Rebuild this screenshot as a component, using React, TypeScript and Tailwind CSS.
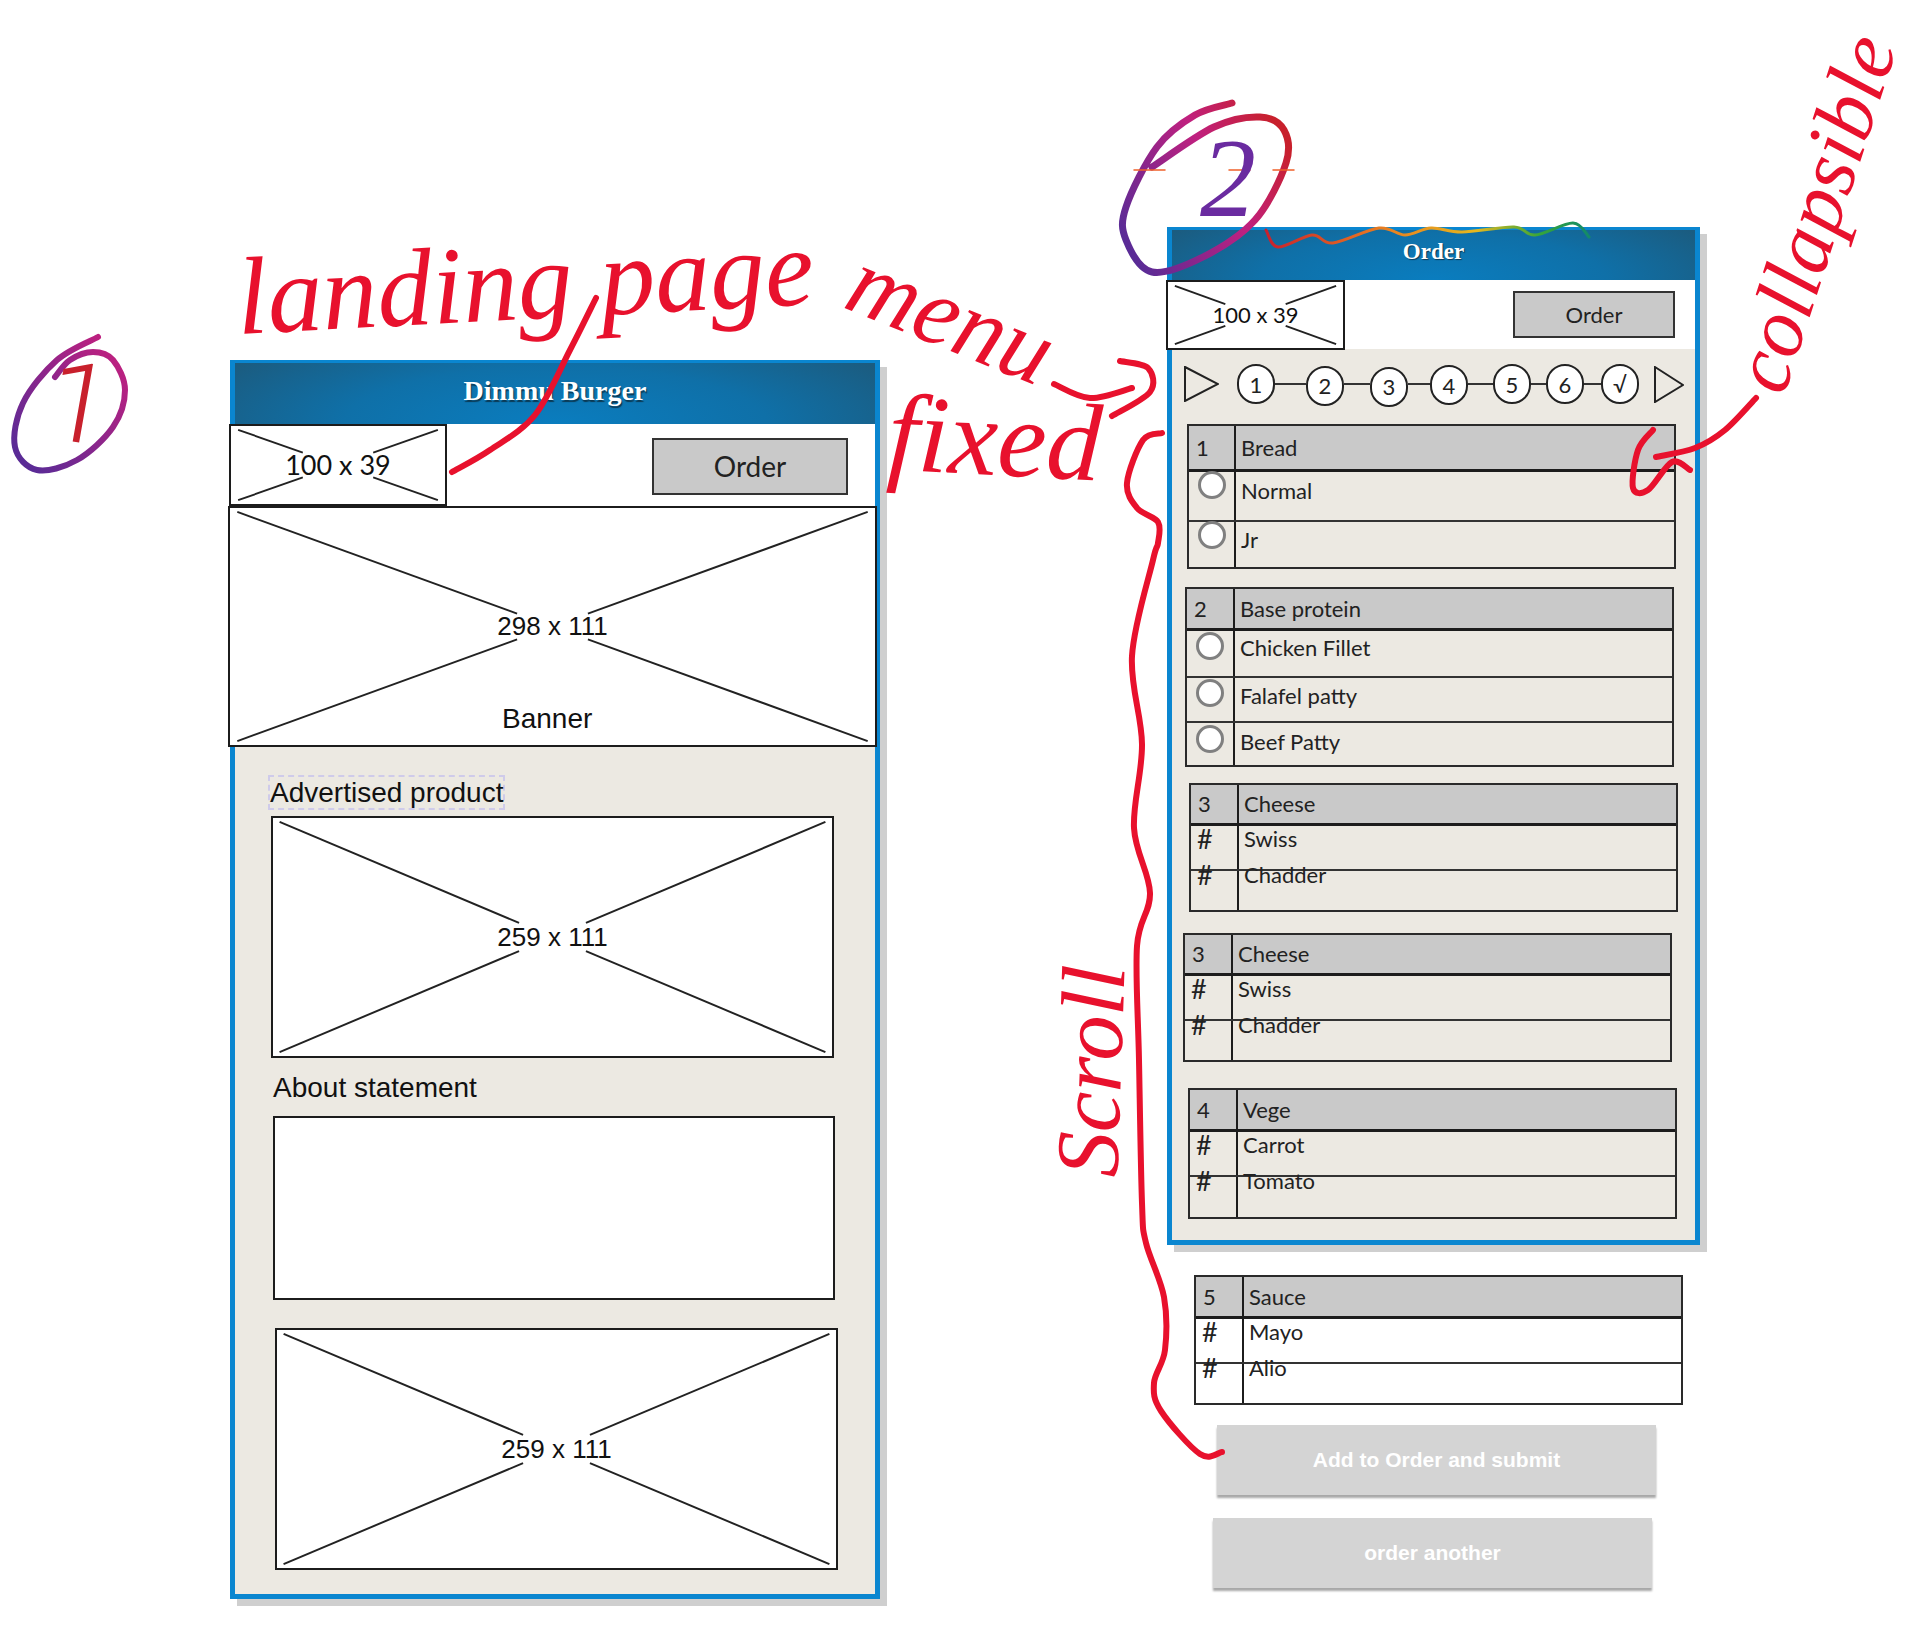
import type { ReactNode } from 'react'

type Pt = [number, number]

// Catmull-Rom through hand-picked points, for the ink strokes
function smooth(pts: Pt[]) {
  let d = `M${pts[0][0]} ${pts[0][1]}`
  for (let i = 0; i < pts.length - 1; i++) {
    const p0 = pts[i - 1] || pts[i]
    const p1 = pts[i]
    const p2 = pts[i + 1]
    const p3 = pts[i + 2] || p2
    const c1x = p1[0] + (p2[0] - p0[0]) / 6
    const c1y = p1[1] + (p2[1] - p0[1]) / 6
    const c2x = p2[0] - (p3[0] - p1[0]) / 6
    const c2y = p2[1] - (p3[1] - p1[1]) / 6
    d += ` C${c1x} ${c1y} ${c2x} ${c2y} ${p2[0]} ${p2[1]}`
  }
  return d
}

function Placeholder({ w, h, gap, className, children }: { w: number; h: number; gap: number; className: string; children: ReactNode }) {
  const inset = 4
  const cx = w / 2
  const cy = h / 2
  const t = 1 - gap / (cx - inset)
  const x = (cx - inset) * t
  const y = (cy - inset) * t
  return (
    <div className={`relative flex shrink-0 items-center justify-center border-2 border-[#1c1c1c] bg-white ${className}`}>
      <svg className="absolute inset-0 h-full w-full" viewBox={`0 0 ${w} ${h}`} fill="none" stroke="#222" strokeWidth="2">
        <path d={`M${inset} ${inset}L${inset + x} ${inset + y}`} />
        <path d={`M${w - inset} ${inset}L${w - inset - x} ${inset + y}`} />
        <path d={`M${inset} ${h - inset}L${inset + x} ${h - inset - y}`} />
        <path d={`M${w - inset} ${h - inset}L${w - inset - x} ${h - inset - y}`} />
      </svg>
      {children}
    </div>
  )
}

function Radio({ className }: { className: string }) {
  return <span className={`ml-[9px] block h-[28px] w-[28px] rounded-full border-[3px] border-[#808080] bg-white ${className}`} />
}

type Row = { mark?: string; label: string; h: string; markClass: string; textClass: string }

function OptionTable({ num, title, rows, headH, colW, className }: { num: string; title: string; rows: Row[]; headH: string; colW: string; className: string }) {
  return (
    <div className={`w-[489px] border-2 border-[#2a2a2a] font-['Lato',sans-serif] text-[22px] leading-[26px] text-[#222] ${className}`}>
      <div className={`flex border-b-[3px] border-[#1c1c1c] bg-[#c9c9c9] ${headH}`}>
        <div className={`flex shrink-0 items-center border-r-2 border-[#1c1c1c] pl-[7px] ${colW}`}>{num}</div>
        <div className="flex items-center pl-[5px]">{title}</div>
      </div>
      {rows.map((r, i) => (
        <div key={r.label} className={`flex ${r.h} ${i > 0 ? 'border-t-2 border-[#333]' : ''}`}>
          <div className={`shrink-0 border-r-2 border-[#1c1c1c] ${colW}`}>
            {r.mark ? <div className={`pl-[6px] text-[27px] ${r.markClass}`}>{r.mark}</div> : <Radio className={r.markClass} />}
          </div>
          <div className={`pl-[5px] ${r.textClass}`}>{r.label}</div>
        </div>
      ))}
    </div>
  )
}

const cheeseRows: Row[] = [
  { mark: '#', label: 'Swiss', h: 'h-[43px]', markClass: 'pt-0', textClass: 'pt-0' },
  { mark: '#', label: 'Chadder', h: 'h-[41px]', markClass: '-mt-[9px]', textClass: '-mt-[9px]' },
]

const steps = [
  { label: '1', offset: 'mt-0', line: 'w-[31px]' },
  { label: '2', offset: 'mt-[3px]', line: 'w-[26px]' },
  { label: '3', offset: 'mt-[5px]', line: 'w-[22px]' },
  { label: '4', offset: 'mt-[2px]', line: 'w-[25px]' },
  { label: '5', offset: 'mt-0', line: 'w-[15px]' },
  { label: '6', offset: 'mt-0', line: 'w-[17px]' },
  { label: '√', offset: 'mt-0', line: 'w-0' },
]

function Stepper() {
  return (
    <div className="flex h-[76px] items-center pb-[6px] pl-[12px]">
      <svg width="35" height="36" viewBox="0 0 35 36" fill="none" stroke="#222" strokeWidth="2" className="mr-[18px] shrink-0">
        <path d="M1 1L34 18L1 35Z" />
      </svg>
      {steps.map((s) => (
        <div key={s.label} className="flex items-center">
          <div className={`flex h-[40px] w-[38px] items-center justify-center rounded-full border-2 border-[#222] bg-white font-['Lato',sans-serif] text-[22px] text-[#222] ${s.offset}`}>
            {s.label}
          </div>
          <div className={`h-[2px] bg-[#333] ${s.line}`} />
        </div>
      ))}
      <svg width="30" height="37" viewBox="0 0 30 37" fill="none" stroke="#222" strokeWidth="2" className="ml-[15px] shrink-0">
        <path d="M1 1L29 19L1 36Z" />
      </svg>
    </div>
  )
}

const headerBg = 'bg-[radial-gradient(ellipse_60%_170%_at_50%_100%,#0a7dbf_0%,#0f70a8_55%,#1b5c80_100%)]'
const frame = 'absolute border-[5px] border-t-[3px] border-[#0a86d0] bg-[#ece9e2] shadow-[7px_7px_0_#cfcfcf]'
const label = "font-['Liberation_Sans',sans-serif] text-[#111]"
const ink = "absolute -translate-x-1/2 -translate-y-1/2 whitespace-nowrap font-['Liberation_Serif',serif] italic leading-none text-[#e8112d]"

function LandingPhone() {
  return (
    <div className={`${frame} left-[230px] top-[360px] h-[1239px] w-[650px]`}>
      <div className={`flex h-[61px] items-center justify-center pb-[6px] font-['Liberation_Serif',serif] text-[28px] font-bold text-white [text-shadow:1px_2px_1px_#0b3a55] ${headerBg}`}>
        Dimmu Burger
      </div>
      <div className="flex h-[82px] items-center justify-between bg-white">
        <Placeholder w={218} h={82} gap={37} className="-ml-[6px] h-[82px] w-[218px]">
          <span className="relative font-['Lato',sans-serif] text-[27px] text-[#111]">100 x 39</span>
        </Placeholder>
        <div className="mr-[27px] mt-[2px] flex h-[57px] w-[196px] items-center justify-center border-2 border-[#333] bg-[#c9c9c9] font-['Lato',sans-serif] text-[28px] text-[#222]">Order</div>
      </div>
      <Placeholder w={649} h={241} gap={36} className="-ml-[7px] h-[241px] w-[649px]">
        <span className={`relative text-[26px] ${label}`}>298 x 111</span>
        <span className={`absolute bottom-[5px] left-[272px] text-[28px] ${label}`}>Banner</span>
      </Placeholder>
      <div className={`ml-[33px] mt-[28px] flex h-[35px] w-[237px] items-center whitespace-nowrap border-2 border-dashed border-[#cfcbea] text-[28px] leading-none ${label}`}>Advertised product</div>
      <Placeholder w={563} h={242} gap={34} className="ml-[36px] mt-[6px] h-[242px] w-[563px]">
        <span className={`relative text-[26px] ${label}`}>259 x 111</span>
      </Placeholder>
      <div className={`ml-[38px] mt-[14px] h-[32px] text-[28px] leading-[32px] ${label}`}>About statement</div>
      <div className="ml-[38px] mt-[12px] h-[184px] w-[562px] border-2 border-[#1c1c1c] bg-white" />
      <Placeholder w={563} h={242} gap={34} className="ml-[40px] mt-[28px] h-[242px] w-[563px]">
        <span className={`relative text-[26px] ${label}`}>259 x 111</span>
      </Placeholder>
    </div>
  )
}

function OrderPhone() {
  return (
    <div className={`${frame} left-[1167px] top-[227px] h-[1018px] w-[533px]`}>
      <div className={`flex h-[50px] items-center justify-center pb-[5px] font-['Liberation_Serif',serif] text-[23px] font-bold text-white [text-shadow:1px_1px_1px_#0b3a55] ${headerBg}`}>
        Order
      </div>
      <div className="flex h-[69px] items-center justify-between bg-white">
        <Placeholder w={179} h={70} gap={32} className="-ml-[6px] h-[70px] w-[179px]">
          <span className="relative font-['Lato',sans-serif] text-[22px] text-[#111]">100 x 39</span>
        </Placeholder>
        <div className="mr-[20px] flex h-[47px] w-[162px] items-center justify-center border-2 border-[#333] bg-[#c9c9c9] font-['Lato',sans-serif] text-[22px] text-[#222]">Order</div>
      </div>
      <Stepper />
      <OptionTable
        num="1"
        title="Bread"
        headH="h-[46px]"
        colW="w-[47px]"
        className="ml-[15px] -mt-[1px]"
        rows={[
          { label: 'Normal', h: 'h-[48px]', markClass: '-mt-[1px]', textClass: 'pt-[6px]' },
          { label: 'Jr', h: 'h-[47px]', markClass: '-mt-[1px]', textClass: 'pt-[5px]' },
        ]}
      />
      <OptionTable
        num="2"
        title="Base protein"
        headH="h-[42px]"
        colW="w-[48px]"
        className="ml-[13px] mt-[18px]"
        rows={[
          { label: 'Chicken Fillet', h: 'h-[45px]', markClass: 'mt-[1px]', textClass: 'pt-[4px]' },
          { label: 'Falafel patty', h: 'h-[45px]', markClass: 'mt-[1px]', textClass: 'pt-[5px]' },
          { label: 'Beef Patty', h: 'h-[44px]', markClass: 'mt-[2px]', textClass: 'pt-[6px]' },
        ]}
      />
      <OptionTable num="3" title="Cheese" headH="h-[41px]" colW="w-[48px]" className="ml-[17px] mt-[16px]" rows={cheeseRows} />
      <OptionTable num="3" title="Cheese" headH="h-[41px]" colW="w-[48px]" className="ml-[11px] mt-[21px]" rows={cheeseRows} />
      <OptionTable
        num="4"
        title="Vege"
        headH="h-[42px]"
        colW="w-[48px]"
        className="ml-[16px] mt-[26px]"
        rows={[
          { mark: '#', label: 'Carrot', h: 'h-[43px]', markClass: 'pt-0', textClass: 'pt-0' },
          { mark: '#', label: 'Tomato', h: 'h-[42px]', markClass: '-mt-[9px]', textClass: '-mt-[9px]' },
        ]}
      />
    </div>
  )
}

// below the fold part of the order screen, sits outside the phone frame
function BelowFold() {
  return (
    <div className="absolute left-[1194px] top-[1275px] flex flex-col">
      <OptionTable
        num="5"
        title="Sauce"
        headH="h-[42px]"
        colW="w-[48px]"
        className="bg-white"
        rows={[
          { mark: '#', label: 'Mayo', h: 'h-[43px]', markClass: 'pt-0', textClass: 'pt-0' },
          { mark: '#', label: 'Alio', h: 'h-[41px]', markClass: '-mt-[9px]', textClass: '-mt-[9px]' },
        ]}
      />
      <div className="ml-[23px] mt-[20px] flex h-[70px] w-[439px] items-center justify-center bg-[#d4d4d4] font-['Liberation_Sans',sans-serif] text-[21px] font-bold text-white shadow-[0_3px_2px_#a8a8a8]">
        Add to Order and submit
      </div>
      <div className="ml-[19px] mt-[23px] flex h-[70px] w-[439px] items-center justify-center bg-[#d4d4d4] font-['Liberation_Sans',sans-serif] text-[21px] font-bold text-white shadow-[0_3px_2px_#a8a8a8]">
        order another
      </div>
    </div>
  )
}

function Ink() {
  return (
    <>
      <svg className="pointer-events-none absolute inset-0 h-full w-full" viewBox="0 0 1911 1637" fill="none" strokeLinecap="round" strokeLinejoin="round">
        <defs>
          <linearGradient id="ring1" gradientUnits="userSpaceOnUse" x1="15" y1="450" x2="125" y2="360">
            <stop offset="0" stopColor="#5a2b96" />
            <stop offset="1" stopColor="#c0207f" />
          </linearGradient>
          <linearGradient id="ring2" gradientUnits="userSpaceOnUse" x1="1125" y1="240" x2="1290" y2="150">
            <stop offset="0" stopColor="#5a2b96" />
            <stop offset="0.6" stopColor="#c0207f" />
            <stop offset="1" stopColor="#c8202c" />
          </linearGradient>
          <linearGradient id="rainbow" gradientUnits="userSpaceOnUse" x1="1266" y1="230" x2="1589" y2="230">
            <stop offset="0" stopColor="#c8202c" />
            <stop offset="0.35" stopColor="#e87a20" />
            <stop offset="0.65" stopColor="#e6b81e" />
            <stop offset="0.85" stopColor="#35a53a" />
            <stop offset="1" stopColor="#138a6a" />
          </linearGradient>
        </defs>

        {/* number rings */}
        <path stroke="url(#ring1)" strokeWidth="6" d={smooth([[98, 337], [57, 360], [23, 403], [15, 447], [37, 470], [77, 460], [113, 427], [125, 390], [113, 360], [93, 352], [70, 360], [55, 377]])} />
        <path stroke="url(#ring2)" strokeWidth="7" d={smooth([[1232, 103], [1195, 115], [1157, 147], [1126, 207], [1126, 240], [1152, 272], [1203, 257], [1255, 220], [1286, 163], [1284, 130], [1260, 117], [1214, 127], [1152, 167]])} />
        <path stroke="url(#rainbow)" strokeWidth="3" d={smooth([[1266, 230], [1278, 247], [1312, 235], [1333, 243], [1379, 228], [1405, 235], [1431, 228], [1462, 232], [1514, 227], [1535, 235], [1573, 223], [1589, 237]])} />
        <path stroke="#f0602a" strokeWidth="1.5" d="M1134 170H1165M1229 170H1250M1273 170H1294" />

        {/* leaders */}
        <g stroke="#e8112d">
          <path strokeWidth="6" d={smooth([[596, 298], [570, 350], [535, 415], [490, 450], [452, 472]])} />
          <path strokeWidth="6" d={smooth([[1054, 384], [1090, 398], [1132, 388]])} />
          <path strokeWidth="6" d={smooth([[1120, 361], [1148, 368], [1150, 392], [1112, 416]])} />
          <path strokeWidth="6" d={smooth([[1162, 433], [1143, 440], [1127, 483], [1137, 508], [1158, 522], [1158, 543], [1153, 560], [1132, 656], [1142, 744], [1134, 828], [1150, 893], [1137, 946], [1139, 1060], [1142, 1203], [1146, 1243], [1164, 1297], [1165, 1350], [1154, 1383], [1161, 1411], [1200, 1454], [1222, 1452]])} />
          <path strokeWidth="6" d={smooth([[1756, 398], [1725, 430], [1695, 448], [1656, 457]])} />
          <path strokeWidth="6" d={smooth([[1653, 430], [1638, 450], [1633, 488], [1648, 490], [1672, 462], [1690, 470]])} />
        </g>
      </svg>

      <span className={`${ink} left-[525px] top-[282px] -rotate-[3deg] text-[110px]`}>landing page</span>
      <span className={`${ink} left-[952px] top-[316px] rotate-[22deg] text-[98px]`}>menu</span>
      <span className={`${ink} left-[995px] top-[438px] rotate-[3deg] text-[110px]`}>fixed</span>
      <span className={`${ink} left-[1814px] top-[213px] [writing-mode:vertical-rl] -rotate-[162deg] text-[84px]`}>collapsible</span>
      <span className={`${ink} left-[1091px] top-[1071px] -rotate-[88deg] text-[90px]`}>Scroll</span>
      <span className="absolute left-[79px] top-[404px] -translate-x-1/2 -translate-y-1/2 rotate-[10deg] font-['Roboto',sans-serif] text-[112px] font-light leading-none text-[#c8202c]">1</span>
      <span className="absolute left-[1228px] top-[178px] -translate-x-1/2 -translate-y-1/2 font-['Liberation_Serif',serif] text-[112px] italic leading-none text-[#6a2ba0]">2</span>
    </>
  )
}

export default function App() {
  return (
    <div className="relative h-[1637px] w-[1911px] overflow-hidden bg-white">
      <LandingPhone />
      <OrderPhone />
      <BelowFold />
      <Ink />
    </div>
  )
}
